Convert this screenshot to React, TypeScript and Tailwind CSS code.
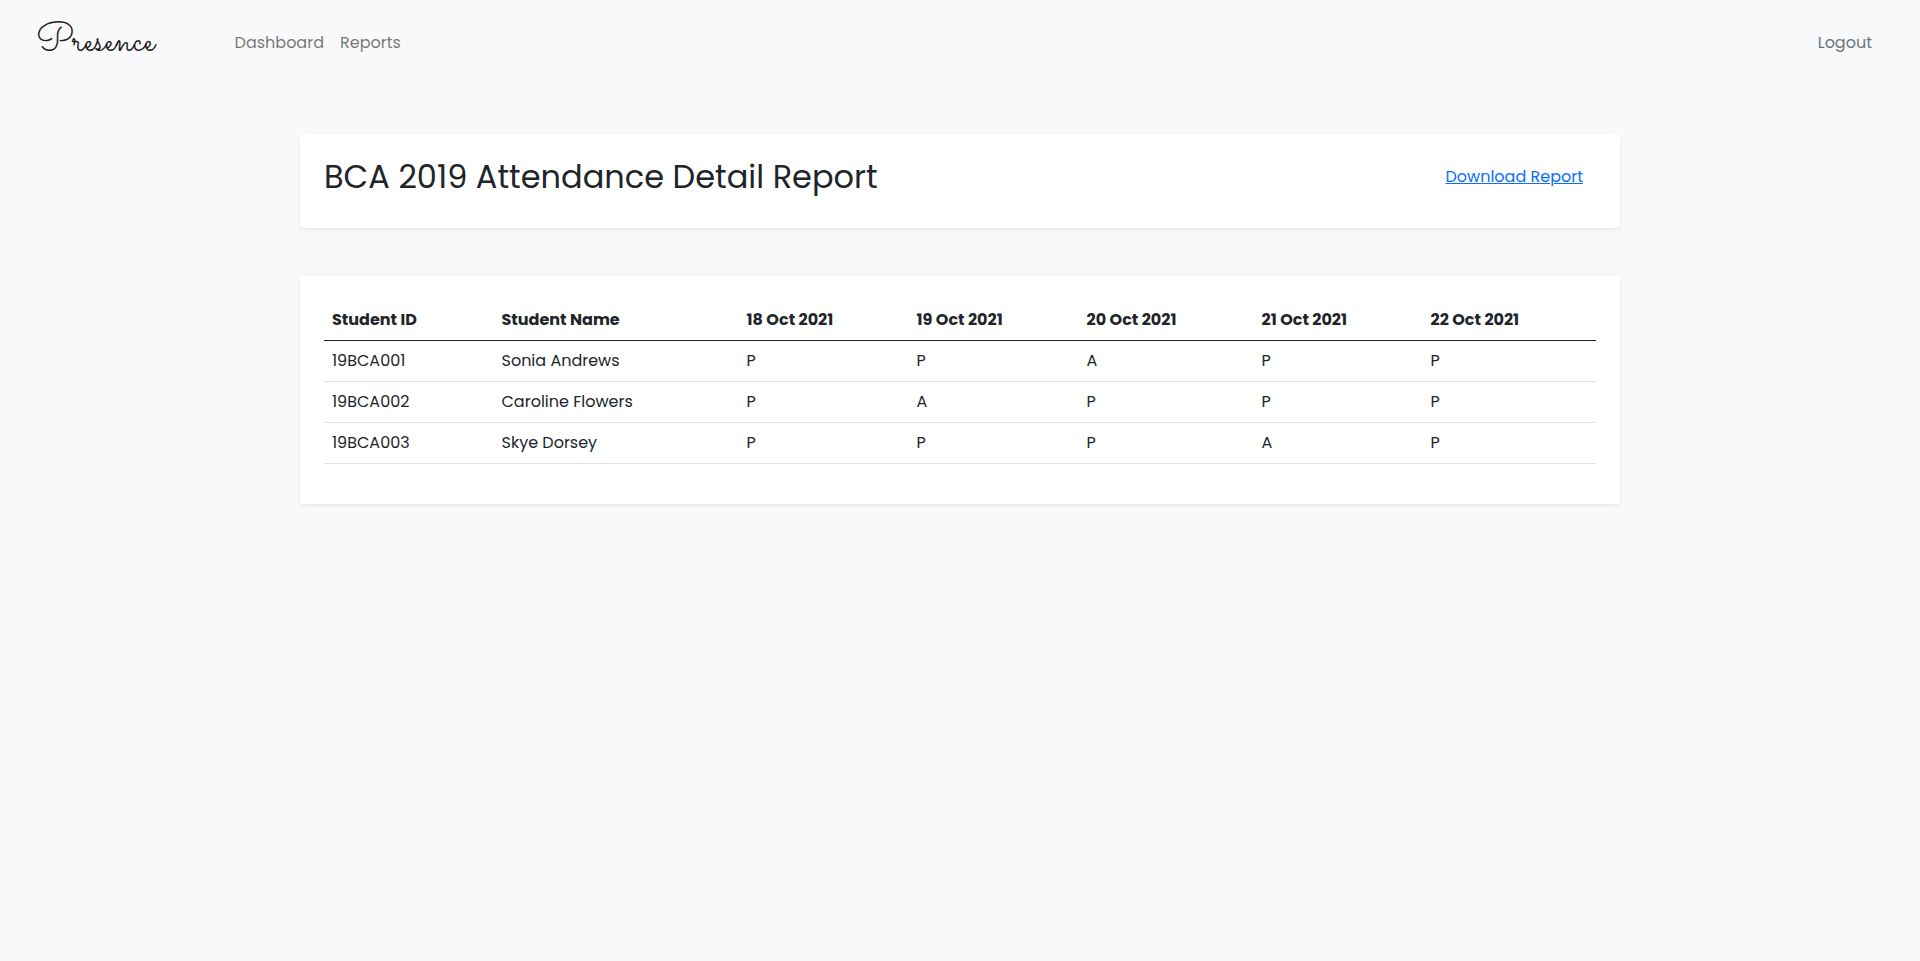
const dates = [
  { label: '18 Oct 2021', width: 'w-[170px]' },
  { label: '19 Oct 2021', width: 'w-[170px]' },
  { label: '20 Oct 2021', width: 'w-[175px]' },
  { label: '21 Oct 2021', width: 'w-[169px]' },
  { label: '22 Oct 2021', width: 'w-[174px]' },
];

const students = [
  { id: '19BCA001', name: 'Sonia Andrews', marks: ['P', 'P', 'A', 'P', 'P'] },
  { id: '19BCA002', name: 'Caroline Flowers', marks: ['P', 'A', 'P', 'P', 'P'] },
  { id: '19BCA003', name: 'Skye Dorsey', marks: ['P', 'P', 'P', 'A', 'P'] },
];

function Navbar() {
  return (
    <nav className="flex h-[86px] items-start pl-9 pr-12">
      <a href="#" className="mt-3 w-[198.6px] font-['Sacramento',cursive] text-[40px] leading-[60px] text-black/90">
        Presence
      </a>
      <div className="mt-[31px] flex flex-1 gap-4 leading-6 text-black/55">
        <a href="#">Dashboard</a>
        <a href="#">Reports</a>
      </div>
      <a href="#" className="mt-[31px] leading-6 text-[#6c757d]">Logout</a>
    </nav>
  );
}

function AttendanceTable() {
  return (
    <table className="w-full table-fixed border-separate border-spacing-0 text-left leading-6">
      <thead>
        <tr className="font-bold">
          <th className="h-[41px] w-[169px] border-b border-[#212529] px-2">Student ID</th>
          <th className="w-[245px] border-b border-[#212529] pr-2 pl-[8.5px]">Student Name</th>
          {dates.map((d) => (
            <th key={d.label} className={`${d.width} border-b border-[#212529] pr-2 pl-[8.6px]`}>{d.label}</th>
          ))}
        </tr>
      </thead>
      <tbody>
        {students.map((s) => (
          <tr key={s.id}>
            <td className="h-[41px] border-b border-[#dee2e6] px-2">{s.id}</td>
            <td className="border-b border-[#dee2e6] pr-2 pl-[8.5px]">{s.name}</td>
            {s.marks.map((m, i) => (
              <td key={i} className="border-b border-[#dee2e6] pr-2 pl-[8.6px]">{m}</td>
            ))}
          </tr>
        ))}
      </tbody>
    </table>
  );
}

export default function App() {
  return (
    <div className="min-h-screen bg-[#f8f9fb] font-['Poppins','Inter',sans-serif] text-base text-[#212529]">
      <Navbar />
      <main className="mx-auto mt-12 flex w-[1320px] flex-col gap-12">
        <section className="flex h-[94px] items-start justify-between rounded bg-white pt-6 pr-[37px] pl-6 shadow-[0_2px_4px_rgba(0,0,0,0.075)]">
          <h1 className="text-[32px] leading-[38px]">BCA 2019 Attendance Detail Report</h1>
          <a href="#" className="mt-[7px] leading-6 text-[#0d6efd] underline">Download Report</a>
        </section>
        <section className="h-[228px] rounded bg-white p-6 shadow-[0_2px_4px_rgba(0,0,0,0.075)]">
          <AttendanceTable />
        </section>
      </main>
    </div>
  );
}
